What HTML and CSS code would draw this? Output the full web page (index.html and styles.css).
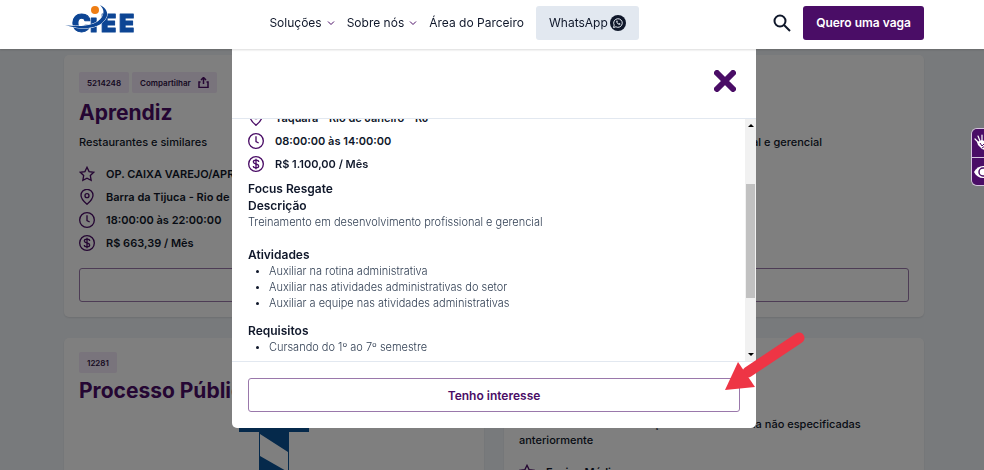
FILE: index.html
```html
<!DOCTYPE html>
<html lang="pt-BR">
<head>
<meta charset="UTF-8">
<meta name="viewport" content="width=device-width, initial-scale=1.0">
<title>CIEE - Vagas</title>
<link rel="stylesheet" href="styles.css">
</head>
<body>

<!-- shared icons -->
<svg class="sprite" aria-hidden="true">
    <symbol id="star" viewBox="0 0 24 24"><path d="M12 2l3.1 6.4 6.9 1-5 5 1.200 7.100L12 18.200l-6.200 3.300L7 14.400l-5-5 6.900-1z"/></symbol>
    <symbol id="pin" viewBox="0 0 24 24"><path d="M12 23s-9-7.500-9-13.500a9 9 0 0 1 18 0C21 15.500 12 23 12 23z"/><circle cx="12" cy="10" r="3"/></symbol>
    <symbol id="clock" viewBox="0 0 24 24"><circle cx="12" cy="12" r="11"/><path d="M12 5v8l4 2"/></symbol>
    <symbol id="money" viewBox="0 0 24 24"><circle cx="12" cy="12" r="11"/><path d="M16 9c0-1.800-1.600-2.700-4-2.700S8 7.300 8 9c0 4 8 2 8 6 0 1.800-1.600 2.800-4 2.800S8 16.800 8 15M12 4v16"/></symbol>
    <symbol id="chevron" viewBox="0 0 8 8"><path d="M1 2.500l3 3 3-3"/></symbol>
</svg>

<header class="topbar">
    <a href="#" class="logo" aria-label="CIEE">
        <svg width="76" height="36" viewBox="0 0 76 36">
            <g class="logo-text">
                <text x="8" y="27">C</text>
                <text x="26" y="27">ı</text>
                <text x="37" y="27">E</text>
                <text x="55" y="27">E</text>
            </g>
            <path d="M1 20C14 22 32 22 38 12C41 7 39 3 36 0C42 3 45 8 42 13C36 25 16 25 1 20z" fill="#0d4594" stroke="#fff" paint-order="stroke"/>
            <circle cx="31" cy="5" r="4" fill="#ee7d14"/>
        </svg>
    </a>
    <nav class="menu">
        <a href="#">Soluções <svg class="chevron"><use href="#chevron"/></svg></a>
        <a href="#">Sobre nós <svg class="chevron"><use href="#chevron"/></svg></a>
        <a href="#">Área do Parceiro</a>
        <a href="#" class="whatsapp">WhatsApp
            <svg width="16" height="16" viewBox="0 0 16 16">
                <circle cx="8" cy="8" r="8" fill="#0f172a"/>
                <path d="M3.500 12.500l.7-2.400a4.300 4.300 0 1 1 1.700 1.700z" fill="none" stroke="#e2e8f0"/>
                <path d="M6.300 5.800c-.5 2 1.900 4.300 3.800 4l.4-1-1.300-.7-.6.500c-.6-.3-1-.7-1.200-1.200l.4-.6-.5-1.200z" fill="#e2e8f0"/>
            </svg>
        </a>
    </nav>
    <div class="actions">
        <button class="search" aria-label="Buscar">
            <svg width="18" height="18" viewBox="0 0 18 18"><circle cx="7" cy="7" r="5.500"/><path d="M11 11l6 6"/></svg>
        </button>
        <button class="cta">Quero uma vaga</button>
    </div>
</header>

<main class="vagas">
    <article class="card">
        <div class="badges">
            <span class="badge">5214248</span>
            <button class="badge">Compartilhar
                <svg width="11" height="11" viewBox="0 0 22 22"><path d="M11 14V2M6 6l5-5 5 5M5 10H2v11h18V10h-3"/></svg>
            </button>
        </div>
        <h2>Aprendiz</h2>
        <p class="area">Restaurantes e similares</p>
        <ul class="info">
            <li><svg><use href="#star"/></svg>OP. CAIXA VAREJO/APRENDIZ</li>
            <li><svg><use href="#pin"/></svg>Barra da Tijuca - Rio de Janeiro - RJ</li>
            <li><svg><use href="#clock"/></svg>18:00:00 às 22:00:00</li>
            <li><svg><use href="#money"/></svg>R$ 663,39 / Mês</li>
        </ul>
        <button class="outline" aria-label="Saiba mais"></button>
    </article>

    <article class="card">
        <div class="badges">
            <span class="badge">5214250</span>
        </div>
        <h2>Estágio</h2>
        <p class="area">Treinamento em desenvolvimento profissional e gerencial</p>
        <button class="outline" aria-label="Saiba mais"></button>
    </article>

    <article class="card compact">
        <div class="badges">
            <span class="badge">12281</span>
        </div>
        <h2>Processo Público</h2>
        <svg class="picture" width="70" height="140" viewBox="0 0 70 140">
            <path d="M0 0h70v16H0z" fill="#0a5296"/>
            <path d="M20 16h30v124H20z" fill="#0a5296"/>
            <path d="M21 18l28 18v20L21 40zM21 64l28 18v20L21 86z" fill="#fff"/>
        </svg>
    </article>

    <article class="card compact">
        <div class="badges">
            <span class="badge">5214251</span>
        </div>
        <h2>Estágio</h2>
        <p class="area">Outras atividades de atenção à saúde humana não especificadas anteriormente</p>
        <ul class="info">
            <li><svg><use href="#star"/></svg>Ensino Médio</li>
        </ul>
    </article>
</main>

<div class="overlay">
    <section class="modal" role="dialog" aria-label="Focus Resgate">
        <div class="modal-header">
            <button class="close" aria-label="Fechar">
                <svg width="22" height="22" viewBox="0 0 22 22"><path d="M3 3l16 16M19 3L3 19"/></svg>
            </button>
        </div>
        <div class="modal-body">
            <div class="content">
                <ul class="info">
                    <li><svg><use href="#pin"/></svg>Taquara - Rio de Janeiro - RJ</li>
                    <li><svg><use href="#clock"/></svg>08:00:00 às 14:00:00</li>
                    <li><svg><use href="#money"/></svg>R$ 1.100,00 / Mês</li>
                </ul>
                <h3>Focus Resgate</h3>
                <h3>Descrição</h3>
                <p>Treinamento em desenvolvimento profissional e gerencial</p>
                <h3>Atividades</h3>
                <ul class="list">
                    <li>Auxiliar na rotina administrativa</li>
                    <li>Auxiliar nas atividades administrativas do setor</li>
                    <li>Auxiliar a equipe nas atividades administrativas</li>
                </ul>
                <h3>Requisitos</h3>
                <ul class="list">
                    <li>Cursando do 1º ao 7º semestre</li>
                </ul>
            </div>
            <div class="scrollbar">
                <svg width="6" height="4" viewBox="0 0 6 4"><path d="M0 4l3-3 3 3z"/></svg>
                <div class="track"><div class="thumb"></div></div>
                <svg width="6" height="4" viewBox="0 0 6 4"><path d="M0 0l3 3 3-3z"/></svg>
            </div>
        </div>
        <div class="modal-footer">
            <button class="outline">Tenho interesse</button>
        </div>
        <svg class="arrow" width="82" height="60" viewBox="0 0 82 60">
            <path d="M75 7L24 41" stroke="#ee3545" stroke-width="11" stroke-linecap="round"/>
            <path d="M1 59L14 31 31 56z" fill="#ee3545"/>
        </svg>
    </section>
</div>

<aside class="a11y">
    <button aria-label="Libras">
        <svg width="18" height="18" viewBox="0 0 18 18">
            <path d="M4 8L1 5M6 7L4 2M8 7V1M10 8l2-6" stroke="#fff" stroke-width="1.200" stroke-linecap="round"/>
            <path d="M3 8l5-2 4 2 4 3-3 6-5-2-4-4z" fill="#fff"/>
            <path d="M6 9l2 3 2-2M8 14l3-2" fill="none" stroke="#4a0d66"/>
        </svg>
    </button>
    <button aria-label="Alto contraste">
        <svg width="18" height="18" viewBox="0 0 18 18">
            <path d="M0 9c4-8 14-8 18 0-4 8-14 8-18 0z" fill="#fff"/>
            <circle cx="9" cy="9" r="4" fill="none" stroke="#4a0d66" stroke-width="1.500"/>
        </svg>
    </button>
</aside>

</body>
</html>
```
FILE: styles.css
```css
* {
    box-sizing: border-box;
}
body {
    margin: 0;
    height: 100vh;
    overflow: hidden;
    font-family: Inter, "Liberation Sans", sans-serif;
    font-size: 11px;
    line-height: 16px;
    color: #0f172a;
    background: #f1f5f9;
}
h2, h3, p, ul {
    margin: 0;
    padding: 0;
}
button {
    font-family: inherit;
    cursor: pointer;
}
a {
    color: inherit;
    text-decoration: none;
}
.sprite {
    display: none;
}

/* Header */
.topbar {
    position: relative;
    z-index: 3;
    display: flex;
    align-items: center;
    justify-content: space-between;
    height: 49px;
    padding: 0 60px 4px 64px;
    background: #fff;
    box-shadow: 0 1px 2px rgba(0, 0, 0, 0.15);
}
.logo svg {
    display: block;
}
.logo-text {
    font-size: 25px;
    font-weight: 900;
    fill: #0d4594;
    stroke: #0d4594;
    stroke-linejoin: round;
}
.menu {
    display: flex;
    align-items: center;
    gap: 12px;
    margin-right: 5px;
    font-size: 12px;
}
.menu a {
    display: flex;
    align-items: center;
    gap: 5px;
}
.menu .whatsapp {
    gap: 2px;
    height: 34px;
    padding: 0 13px;
    border-radius: 3px;
    background: #e2e8f0;
}
.chevron {
    width: 8px;
    height: 8px;
    fill: none;
    stroke: #4a0d66;
}
.actions {
    display: flex;
    align-items: center;
    gap: 12px;
}
.search {
    display: flex;
    padding: 0;
    border: none;
    background: none;
}
.search svg {
    fill: none;
    stroke: #0f172a;
    stroke-width: 2;
}
.cta {
    height: 34px;
    padding: 0 13px;
    border: none;
    border-radius: 3px;
    background: #4a0d66;
    color: #fff;
    font-size: 12px;
    font-weight: 600;
}

/* Cards */
.vagas {
    display: grid;
    grid-template-columns: 1fr 1fr;
    gap: 21px 20px;
    padding: 6px 60px 0 64px;
}
.card {
    display: flex;
    flex-direction: column;
    padding: 17px 15px 15px;
    border-radius: 5px;
    background: #fff;
    box-shadow: 0 1px 2px rgba(0, 0, 0, 0.1);
}
.badges {
    display: flex;
    gap: 3px;
}
.badge {
    display: flex;
    align-items: center;
    gap: 7px;
    height: 21px;
    padding: 0 8px;
    border: none;
    border-radius: 2px;
    background: #f3e8f8;
    color: #2e1245;
    font-size: 8px;
    font-weight: 600;
}
.badge svg {
    fill: none;
    stroke: #4a0d66;
    stroke-width: 3;
}
.card h2 {
    margin: 5px 0 6px;
    color: #4a0d66;
    font-size: 21px;
    line-height: 30px;
    font-weight: 700;
}
.area {
    margin-bottom: 12px;
    font-weight: 500;
}
.compact {
    padding-top: 14px;
}
.compact h2 {
    margin: 3px 0 10px;
}
.info {
    list-style: none;
    font-weight: 600;
}
.info li {
    display: flex;
    align-items: center;
    gap: 11px;
    height: 23px;
}
.info svg {
    width: 16px;
    height: 16px;
    fill: none;
    stroke: #4a0d66;
    stroke-width: 2;
}
.outline {
    display: block;
    width: 100%;
    height: 34px;
    border: 1px solid #9a78ab;
    border-radius: 3px;
    background: #fff;
    color: #4a0d66;
    font-size: 12px;
    font-weight: 600;
}
.card .outline {
    margin-top: auto;
}
.card .info + .outline {
    margin-top: 14px;
}
.picture {
    align-self: center;
}

/* Modal */
.overlay {
    position: fixed;
    inset: 0;
    z-index: 2;
    display: flex;
    align-items: center;
    justify-content: center;
    padding-left: 4px;
    background: rgba(0, 0, 0, 0.5);
}
.modal {
    position: relative;
    width: 524px;
    border-radius: 5px;
    background: #fff;
}
.modal-header {
    display: flex;
    align-items: center;
    justify-content: flex-end;
    height: 77px;
    padding: 2px 20px 0;
    border-bottom: 1px solid #e2e8f0;
}
.close {
    display: flex;
    padding: 0;
    border: none;
    background: none;
}
.close svg {
    stroke: #4a0d66;
    stroke-width: 6;
    stroke-linecap: round;
}
.modal-body {
    display: flex;
    height: 242px;
    overflow: hidden;
}
.content {
    flex: 1;
    display: flex;
    flex-direction: column;
    justify-content: flex-end;
    padding: 0 16px 6px;
}
.content .info {
    margin-bottom: 5px;
}
.content h3 {
    font-size: 12px;
    line-height: 17px;
    font-weight: 600;
}
.content p {
    margin-bottom: 16px;
    color: #334155;
    font-weight: 300;
}
.list {
    padding-left: 21px;
    color: #334155;
    font-weight: 300;
}
.list + h3 {
    margin-top: 11px;
}
.list li::marker {
    color: #0f172a;
    font-size: 9px;
}
.scrollbar {
    display: flex;
    flex-direction: column;
    align-items: center;
    width: 11px;
    padding: 4px 0;
    background: #f1f1f1;
}
.track {
    flex: 1;
    width: 9px;
    padding-top: 57px;
}
.thumb {
    height: 114px;
    background: #c1c1c1;
}
.modal-footer {
    padding: 16px;
    border-top: 1px solid #e2e8f0;
}
.arrow {
    position: absolute;
    right: -50px;
    bottom: 37px;
}

/* Accessibility buttons */
.a11y {
    position: fixed;
    top: 128px;
    right: 0;
    z-index: 4;
    width: 13px;
    overflow: hidden;
    border: 1px solid #d5c3de;
    border-right: none;
    border-radius: 6px 0 0 6px;
}
.a11y button {
    display: flex;
    align-items: center;
    width: 100%;
    height: 28px;
    padding: 0 0 0 2px;
    border: none;
    background: #4a0d66;
}
.a11y button + button {
    border-top: 1px solid #d5c3de;
}
.a11y svg {
    flex-shrink: 0;
}
```
